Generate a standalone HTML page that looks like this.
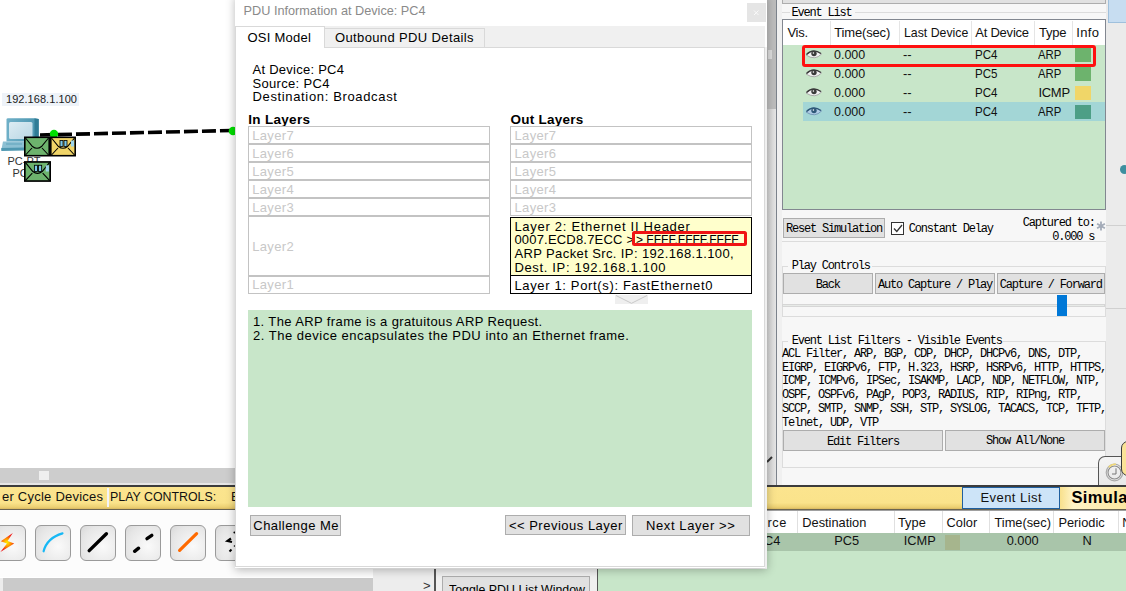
<!DOCTYPE html>
<html><head><meta charset="utf-8"><style>
html,body{margin:0;padding:0;width:1126px;height:591px;overflow:hidden;background:#fff}
body>div,body>svg{position:absolute}
</style></head><body>
<div style="left:0px;top:0px;width:1126px;height:591px;background:#fff"></div>
<div style="left:2px;top:93px;width:77px;height:13px;background:#eef3f9"></div>
<div style="left:6px;top:93.29px;font:normal 11px/13px 'Liberation Sans', sans-serif;letter-spacing:0.05px;color:#1a1a1a;white-space:pre;">192.168.1.100</div>
<svg style="left:0;top:112px" width="80" height="72" viewBox="0 112 80 72">
<defs><linearGradient id="scr" x1="0" y1="0" x2="1" y2="1"><stop offset="0" stop-color="#dcecf3"/><stop offset="1" stop-color="#b9d7e4"/></linearGradient>
<linearGradient id="frm" x1="0" y1="0" x2="1" y2="0"><stop offset="0" stop-color="#6fb0c8"/><stop offset="1" stop-color="#4a94ae"/></linearGradient></defs>
<path d="M6.5 119.5 Q6.5 118.3 8 118.3 L35 118.3 L38.7 119 L38.7 141.5 L6.5 141.5 Z" fill="url(#frm)"/>
<path d="M34.5 118.6 L38.7 119 L38.7 141.5 L34.5 141.5 Z" fill="#2f7c96"/>
<rect x="9" y="122" width="23.5" height="17" rx="1.5" fill="url(#scr)"/>
<path d="M3 141.5 L26 141.5 L24.5 149 L1.3 150 Z" fill="#8cc0d3"/>
<path d="M1.3 148 L24.8 147.5 L24.5 150.5 L1.3 151 Z" fill="#4f98b1"/>
<path d="M6 144 L22 144" stroke="#5ea3bb" stroke-width="1"/>
</svg>
<div style="left:7.5px;top:154.79px;font:normal 11px/13px 'Liberation Sans', sans-serif;letter-spacing:0px;color:#333;white-space:pre;">PC-PT</div>
<div style="left:12.5px;top:167.29px;font:normal 11px/13px 'Liberation Sans', sans-serif;letter-spacing:0px;color:#333;white-space:pre;">PC4</div>
<svg style="left:0;top:120px" width="236" height="24" viewBox="0 120 236 24">
<line x1="40" y1="135" x2="232" y2="130.5" stroke="#000" stroke-width="3.6" stroke-dasharray="14 4"/>
<circle cx="54" cy="134" r="4.2" fill="#00e000"/>
<circle cx="233" cy="131" r="4.3" fill="#00e000"/>
</svg>
<svg style="left:24px;top:135.5px" width="26" height="21" viewBox="0 0 26 20"><rect x="0.8" y="0.8" width="24.4" height="18.4" fill="#6db36d" stroke="#000" stroke-width="1.6"/><path d="M1.5 1.5 L8.5 10 Q13 13.5 17.5 10 L24.5 1.5 M1.5 18.5 L8 11.5 M24.5 18.5 L18 11.5" fill="none" stroke="#000" stroke-width="1.1"/></svg>
<svg style="left:50px;top:135.5px" width="26" height="21" viewBox="0 0 26 20"><rect x="0.8" y="0.8" width="24.4" height="18.4" fill="#f0d468" stroke="#000" stroke-width="1.6"/><path d="M1.5 1.5 L8.5 10 Q13 13.5 17.5 10 L24.5 1.5 M1.5 18.5 L8 11.5 M24.5 18.5 L18 11.5" fill="none" stroke="#000" stroke-width="1.1"/><rect x="10" y="4" width="3" height="6" fill="#7cc8e8" stroke="#000" stroke-width="0.8"/><rect x="14" y="4" width="3" height="6" fill="#7cc8e8" stroke="#000" stroke-width="0.8"/><rect x="21" y="4" width="3" height="6" fill="#9cd4ea"/></svg>
<svg style="left:24px;top:160.5px" width="27" height="21" viewBox="0 0 26 20"><rect x="0.8" y="0.8" width="24.4" height="18.4" fill="#6db36d" stroke="#000" stroke-width="1.6"/><path d="M1.5 1.5 L8.5 10 Q13 13.5 17.5 10 L24.5 1.5 M1.5 18.5 L8 11.5 M24.5 18.5 L18 11.5" fill="none" stroke="#000" stroke-width="1.1"/><rect x="10" y="4" width="3" height="6" fill="#7cc8e8" stroke="#000" stroke-width="0.8"/><rect x="14" y="4" width="3" height="6" fill="#7cc8e8" stroke="#000" stroke-width="0.8"/><rect x="21" y="4" width="3" height="6" fill="#9cd4ea"/></svg>
<div style="left:0px;top:468px;width:236px;height:15px;background:#cdcdcd"></div>
<div style="left:39px;top:471px;width:10px;height:9px;background:#efefef"></div>
<div style="left:0px;top:483px;width:1126px;height:2px;background:#e6e6e6"></div>
<div style="left:0px;top:485px;width:1126px;height:1.5px;background:#3c3c3c"></div>
<div style="left:0px;top:486.5px;width:1126px;height:22px;background:linear-gradient(#fbe48e,#fae38b 72%,#ecd072 92%,#d8b860)"></div>
<div style="left:0px;top:508.5px;width:1126px;height:1.5px;background:#6a6450"></div>
<div style="left:2px;top:489.09px;font:normal 13px/16px 'Liberation Sans', sans-serif;letter-spacing:0.232px;color:#111;white-space:pre;">er Cycle Devices</div>
<div style="left:107px;top:488px;width:2px;height:19px;background:#f4f4f8"></div>
<div style="left:109.5px;top:489.09px;font:normal 13px/16px 'Liberation Sans', sans-serif;letter-spacing:0px;color:#111;white-space:pre;transform:scaleX(0.9525);transform-origin:0 0;">PLAY CONTROLS:</div>
<div style="left:231px;top:489.09px;font:normal 13px/16px 'Liberation Sans', sans-serif;letter-spacing:0px;color:#111;white-space:pre;">B</div>
<div style="left:0px;top:510px;width:770px;height:67px;background:#fcfcfc"></div>
<div style="left:-10px;top:525px;width:36px;height:36px;box-sizing:border-box;border:1px solid #9a9a9a;border-radius:6px;background:radial-gradient(circle at 65% 60%,#fafafa,#e6e6e6 70%,#d8d8d8)"></div>
<div style="left:35px;top:525px;width:36px;height:36px;box-sizing:border-box;border:1px solid #9a9a9a;border-radius:6px;background:radial-gradient(circle at 65% 60%,#fafafa,#e6e6e6 70%,#d8d8d8)"></div>
<div style="left:80px;top:525px;width:36px;height:36px;box-sizing:border-box;border:1px solid #9a9a9a;border-radius:6px;background:radial-gradient(circle at 65% 60%,#fafafa,#e6e6e6 70%,#d8d8d8)"></div>
<div style="left:125px;top:525px;width:36px;height:36px;box-sizing:border-box;border:1px solid #9a9a9a;border-radius:6px;background:radial-gradient(circle at 65% 60%,#fafafa,#e6e6e6 70%,#d8d8d8)"></div>
<div style="left:170px;top:525px;width:36px;height:36px;box-sizing:border-box;border:1px solid #9a9a9a;border-radius:6px;background:radial-gradient(circle at 65% 60%,#fafafa,#e6e6e6 70%,#d8d8d8)"></div>
<div style="left:215px;top:525px;width:36px;height:36px;box-sizing:border-box;border:1px solid #9a9a9a;border-radius:6px;background:radial-gradient(circle at 65% 60%,#fafafa,#e6e6e6 70%,#d8d8d8)"></div>
<svg style="left:0;top:525px" width="236" height="36" viewBox="0 525 236 36">
<defs><radialGradient id="lg" gradientUnits="userSpaceOnUse" cx="7" cy="542.5" r="8"><stop offset="0" stop-color="#fff000"/><stop offset="0.45" stop-color="#ff9a00"/><stop offset="1" stop-color="#f01818"/></radialGradient></defs>
<path d="M12.8 533 L0.8 541.2 L7 543.4 L0.4 552 L14.2 543.4 L7.6 541 Z" fill="url(#lg)"/>
<path d="M43.6 551.3 Q47 538 62.5 533.4" fill="none" stroke="#18b8f5" stroke-width="2.2" stroke-linecap="round"/>
<line x1="89.2" y1="550.6" x2="106.4" y2="533.8" stroke="#000" stroke-width="3.4" stroke-linecap="round"/>
<line x1="134.6" y1="551.3" x2="138.6" y2="548.2" stroke="#000" stroke-width="3.4" stroke-linecap="round"/>
<line x1="147" y1="538.6" x2="151.8" y2="535.4" stroke="#000" stroke-width="3.4" stroke-linecap="round"/>
<line x1="179.6" y1="550.4" x2="196.6" y2="533.7" stroke="#ff6a00" stroke-width="3.2" stroke-linecap="round"/>
<path d="M231 538.5 L227.5 541 L232 542" fill="none" stroke="#000" stroke-width="2.2"/>
<circle cx="234.5" cy="532.5" r="1.1" fill="#000"/><circle cx="234.5" cy="546" r="0.8" fill="#000"/><path d="M229.5 551.5 L231.5 549.5" stroke="#000" stroke-width="2"/>
</svg>
<div style="left:0px;top:577.5px;width:1126px;height:14px;background:#cacaca"></div>
<div style="left:0px;top:577.5px;width:3px;height:14px;background:#ececec"></div>
<div style="left:373px;top:569px;width:62px;height:22px;background:#ededed"></div>
<div style="left:423px;top:578.09px;font:normal 13px/16px 'Liberation Sans', sans-serif;letter-spacing:0px;color:#333;white-space:pre;">&gt;</div>
<div style="left:434px;top:569px;width:1.5px;height:22px;background:#555"></div>
<div style="left:435.5px;top:569px;width:162px;height:22px;background:#f0f0f0"></div>
<div style="left:442px;top:575.5px;width:148px;height:20px;box-sizing:border-box;border:1px solid #adadad;background:#e1e1e1"></div>
<div style="left:449px;top:582.09px;font:normal 13px/16px 'Liberation Sans', sans-serif;letter-spacing:0px;color:#000;white-space:pre;transform:scaleX(0.9507);transform-origin:0 0;">Toggle PDU List Window</div>
<div style="left:596.5px;top:569px;width:1.5px;height:22px;background:#555"></div>
<div style="left:598px;top:569px;width:528px;height:22px;background:#c8e6c9"></div>
<div style="left:767px;top:510px;width:359px;height:81px;background:#c8e6c9"></div>
<div style="left:767px;top:510px;width:359px;height:1px;background:#a0a0a0"></div>
<div style="left:767px;top:511px;width:359px;height:21.5px;background:#fff"></div>
<div style="left:767px;top:532.5px;width:359px;height:18px;background:#a9c5aa"></div>
<div style="left:797.2px;top:511px;width:1px;height:21.5px;background:#e0e0e0"></div>
<div style="left:893.7px;top:511px;width:1px;height:21.5px;background:#e0e0e0"></div>
<div style="left:941.5px;top:511px;width:1px;height:21.5px;background:#e0e0e0"></div>
<div style="left:989.2px;top:511px;width:1px;height:21.5px;background:#e0e0e0"></div>
<div style="left:1053.3px;top:511px;width:1px;height:21.5px;background:#e0e0e0"></div>
<div style="left:1117.5px;top:511px;width:1px;height:21.5px;background:#e0e0e0"></div>
<div style="left:767.6px;top:515.26px;font:normal 12.8px/15px 'Liberation Sans', sans-serif;letter-spacing:0.509px;color:#111;white-space:pre;">rce</div>
<div style="left:802.3px;top:515.26px;font:normal 12.8px/15px 'Liberation Sans', sans-serif;letter-spacing:0px;color:#111;white-space:pre;">Destination</div>
<div style="left:898px;top:515.26px;font:normal 12.8px/15px 'Liberation Sans', sans-serif;letter-spacing:0px;color:#111;white-space:pre;">Type</div>
<div style="left:946.6px;top:515.26px;font:normal 12.8px/15px 'Liberation Sans', sans-serif;letter-spacing:0px;color:#111;white-space:pre;">Color</div>
<div style="left:994.5px;top:515.26px;font:normal 12.8px/15px 'Liberation Sans', sans-serif;letter-spacing:0px;color:#111;white-space:pre;">Time(sec)</div>
<div style="left:1058.4px;top:515.26px;font:normal 12.8px/15px 'Liberation Sans', sans-serif;letter-spacing:0px;color:#111;white-space:pre;">Periodic</div>
<div style="left:1122.2px;top:515.26px;font:normal 12.8px/15px 'Liberation Sans', sans-serif;letter-spacing:0px;color:#111;white-space:pre;">Num</div>
<div style="left:764px;top:532.66px;font:normal 12.8px/15px 'Liberation Sans', sans-serif;letter-spacing:0px;color:#111;white-space:pre;">C4</div>
<div style="left:834.2px;top:532.66px;font:normal 12.8px/15px 'Liberation Sans', sans-serif;letter-spacing:0px;color:#111;white-space:pre;">PC5</div>
<div style="left:903.7px;top:532.66px;font:normal 12.8px/15px 'Liberation Sans', sans-serif;letter-spacing:0px;color:#111;white-space:pre;">ICMP</div>
<div style="left:945.3px;top:535px;width:14.5px;height:15px;background:#a6b58d"></div>
<div style="left:1006.7px;top:532.66px;font:normal 12.8px/15px 'Liberation Sans', sans-serif;letter-spacing:0px;color:#111;white-space:pre;">0.000</div>
<div style="left:1082.4px;top:532.66px;font:normal 12.8px/15px 'Liberation Sans', sans-serif;letter-spacing:0px;color:#111;white-space:pre;">N</div>
<div style="left:962.2px;top:486.5px;width:97.5px;height:22px;box-sizing:border-box;border:1.5px solid #1f5f9f;background:#cde4f8"></div>
<div style="left:980.4px;top:490.29px;font:normal 13px/16px 'Liberation Sans', sans-serif;letter-spacing:0.45px;color:#111;white-space:pre;">Event List</div>
<div style="left:1060px;top:486.5px;width:66px;height:22px;background:linear-gradient(90deg,#f8e08c,#fff4c8 20%,#fbe7a0)"></div>
<div style="left:1071.5px;top:487.38px;font:bold 16.5px/20px 'Liberation Sans', sans-serif;letter-spacing:0.35px;color:#000;white-space:pre;">Simulation</div>
<div style="left:767px;top:0px;width:10px;height:485px;background:linear-gradient(90deg,#d2d2d2,#e8e8e8)"></div>
<div style="left:767px;top:0px;width:9px;height:109px;background:#bdbdbd"></div>
<div style="left:767.5px;top:50px;width:4.5px;height:9px;background:#dedede"></div>
<div style="left:776px;top:0px;width:1.2px;height:485px;background:#7c838c"></div>
<div style="left:777px;top:0px;width:349px;height:485px;background:#f0f0f0"></div>
<div style="left:782px;top:0px;width:324px;height:485px;background:#f7f7f7"></div>
<div style="left:1106px;top:0px;width:20px;height:485px;background:#ebebeb"></div>
<div style="left:1108.3px;top:-1px;width:19px;height:23.8px;box-sizing:border-box;border:1px solid #9fc0dc;background:#c7ddf1"></div>
<div style="left:1106px;top:225px;width:20px;height:1px;background:#d0d0d0"></div>
<div style="left:1106px;top:308px;width:20px;height:1px;background:#d0d0d0"></div>
<div style="left:1120px;top:165px;width:9px;height:9px;border-radius:50%;background:#3d8f9f"></div>
<div style="left:781.5px;top:-10px;width:324px;height:13.5px;box-sizing:border-box;border:1px solid #adadad;background:#e1e1e1"></div>
<div style="left:782px;top:12.4px;width:8px;height:1px;background:#dcdcdc"></div>
<div style="left:855px;top:12.4px;width:251px;height:1px;background:#dcdcdc"></div>
<div style="left:791.6px;top:6.41px;font:normal 12px/14px 'Liberation Mono', monospace;letter-spacing:-1.2px;color:#000;white-space:pre;">Event List</div>
<div style="left:782px;top:18.8px;width:324px;height:191.7px;box-sizing:border-box;border:1px solid #828790;background:#c8e6c9"></div>
<div style="left:783px;top:19.8px;width:322px;height:25.2px;background:#fff"></div>
<div style="left:830px;top:20.5px;width:1px;height:24.5px;background:#e5e5e5"></div>
<div style="left:898.9px;top:20.5px;width:1px;height:24.5px;background:#e5e5e5"></div>
<div style="left:970.6px;top:20.5px;width:1px;height:24.5px;background:#e5e5e5"></div>
<div style="left:1034.4px;top:20.5px;width:1px;height:24.5px;background:#e5e5e5"></div>
<div style="left:1071.7px;top:20.5px;width:1px;height:24.5px;background:#e5e5e5"></div>
<div style="left:787.4px;top:25.09px;font:normal 13px/16px 'Liberation Sans', sans-serif;letter-spacing:-0.245px;color:#111;white-space:pre;">Vis.</div>
<div style="left:834.2px;top:25.09px;font:normal 13px/16px 'Liberation Sans', sans-serif;letter-spacing:-0.149px;color:#111;white-space:pre;">Time(sec)</div>
<div style="left:903.7px;top:25.09px;font:normal 13px/16px 'Liberation Sans', sans-serif;letter-spacing:0px;color:#111;white-space:pre;transform:scaleX(0.9467);transform-origin:0 0;">Last Device</div>
<div style="left:975.2px;top:25.09px;font:normal 13px/16px 'Liberation Sans', sans-serif;letter-spacing:-0.216px;color:#111;white-space:pre;">At Device</div>
<div style="left:1039px;top:25.09px;font:normal 13px/16px 'Liberation Sans', sans-serif;letter-spacing:-0.228px;color:#111;white-space:pre;">Type</div>
<div style="left:1076.3px;top:25.09px;font:normal 13px/16px 'Liberation Sans', sans-serif;letter-spacing:0.339px;color:#111;white-space:pre;">Info</div>
<svg style="left:805px;top:49px" width="18" height="11" viewBox="0 0 18 11">
<path d="M1 6 Q8 -1.5 16.5 5 Q10 12 1 6 Z" fill="#f2f2f2" stroke="#a0a0a0" stroke-width="0.9"/>
<path d="M1.5 5.5 Q8 -1 16 4.5" fill="none" stroke="#3a3a3a" stroke-width="1.3"/>
<circle cx="9" cy="4.6" r="2.7" fill="#3a3a3a"/><circle cx="8.4" cy="4" r="0.8" fill="#fff"/>
</svg>
<div style="left:834.2px;top:46.89px;font:normal 13px/16px 'Liberation Sans', sans-serif;letter-spacing:0px;color:#111;white-space:pre;transform:scaleX(0.9591);transform-origin:0 0;">0.000</div>
<div style="left:903px;top:46.89px;font:normal 13px/16px 'Liberation Sans', sans-serif;letter-spacing:-0.2px;color:#111;white-space:pre;">--</div>
<div style="left:974.6px;top:46.89px;font:normal 13px/16px 'Liberation Sans', sans-serif;letter-spacing:0px;color:#111;white-space:pre;transform:scaleX(0.8897);transform-origin:0 0;">PC4</div>
<div style="left:1038.4px;top:46.89px;font:normal 13px/16px 'Liberation Sans', sans-serif;letter-spacing:0px;color:#111;white-space:pre;transform:scaleX(0.8717);transform-origin:0 0;">ARP</div>
<div style="left:1075px;top:47.6px;width:16.2px;height:14px;background:#6db36d"></div>
<svg style="left:805px;top:68px" width="18" height="11" viewBox="0 0 18 11">
<path d="M1 6 Q8 -1.5 16.5 5 Q10 12 1 6 Z" fill="#f2f2f2" stroke="#a0a0a0" stroke-width="0.9"/>
<path d="M1.5 5.5 Q8 -1 16 4.5" fill="none" stroke="#3a3a3a" stroke-width="1.3"/>
<circle cx="9" cy="4.6" r="2.7" fill="#3a3a3a"/><circle cx="8.4" cy="4" r="0.8" fill="#fff"/>
</svg>
<div style="left:834.2px;top:65.89px;font:normal 13px/16px 'Liberation Sans', sans-serif;letter-spacing:0px;color:#111;white-space:pre;transform:scaleX(0.9591);transform-origin:0 0;">0.000</div>
<div style="left:903px;top:65.89px;font:normal 13px/16px 'Liberation Sans', sans-serif;letter-spacing:-0.2px;color:#111;white-space:pre;">--</div>
<div style="left:974.6px;top:65.89px;font:normal 13px/16px 'Liberation Sans', sans-serif;letter-spacing:0px;color:#111;white-space:pre;transform:scaleX(0.8897);transform-origin:0 0;">PC5</div>
<div style="left:1038.4px;top:65.89px;font:normal 13px/16px 'Liberation Sans', sans-serif;letter-spacing:0px;color:#111;white-space:pre;transform:scaleX(0.8717);transform-origin:0 0;">ARP</div>
<div style="left:1075px;top:66.6px;width:16.2px;height:14px;background:#6db36d"></div>
<svg style="left:805px;top:87px" width="18" height="11" viewBox="0 0 18 11">
<path d="M1 6 Q8 -1.5 16.5 5 Q10 12 1 6 Z" fill="#f2f2f2" stroke="#a0a0a0" stroke-width="0.9"/>
<path d="M1.5 5.5 Q8 -1 16 4.5" fill="none" stroke="#3a3a3a" stroke-width="1.3"/>
<circle cx="9" cy="4.6" r="2.7" fill="#3a3a3a"/><circle cx="8.4" cy="4" r="0.8" fill="#fff"/>
</svg>
<div style="left:834.2px;top:84.89px;font:normal 13px/16px 'Liberation Sans', sans-serif;letter-spacing:0px;color:#111;white-space:pre;transform:scaleX(0.9591);transform-origin:0 0;">0.000</div>
<div style="left:903px;top:84.89px;font:normal 13px/16px 'Liberation Sans', sans-serif;letter-spacing:-0.2px;color:#111;white-space:pre;">--</div>
<div style="left:974.6px;top:84.89px;font:normal 13px/16px 'Liberation Sans', sans-serif;letter-spacing:0px;color:#111;white-space:pre;transform:scaleX(0.8897);transform-origin:0 0;">PC4</div>
<div style="left:1038.4px;top:84.89px;font:normal 13px/16px 'Liberation Sans', sans-serif;letter-spacing:-0.267px;color:#111;white-space:pre;">ICMP</div>
<div style="left:1075px;top:85.6px;width:16.2px;height:14px;background:#f0d668"></div>
<div style="left:803px;top:102px;width:302px;height:19px;background:#a3d6d6"></div>
<svg style="left:805px;top:106px" width="18" height="11" viewBox="0 0 18 11">
<path d="M1 6 Q8 -1.5 16.5 5 Q10 12 1 6 Z" fill="#b0cde6" stroke="#6f93b3" stroke-width="0.9"/>
<path d="M1.5 5.5 Q8 -1 16 4.5" fill="none" stroke="#2f5878" stroke-width="1.3"/>
<circle cx="9" cy="4.6" r="2.7" fill="#2f5878"/><circle cx="8.4" cy="4" r="0.8" fill="#fff"/>
</svg>
<div style="left:834.2px;top:103.89px;font:normal 13px/16px 'Liberation Sans', sans-serif;letter-spacing:0px;color:#111;white-space:pre;transform:scaleX(0.9591);transform-origin:0 0;">0.000</div>
<div style="left:903px;top:103.89px;font:normal 13px/16px 'Liberation Sans', sans-serif;letter-spacing:-0.2px;color:#111;white-space:pre;">--</div>
<div style="left:974.6px;top:103.89px;font:normal 13px/16px 'Liberation Sans', sans-serif;letter-spacing:0px;color:#111;white-space:pre;transform:scaleX(0.8897);transform-origin:0 0;">PC4</div>
<div style="left:1038.4px;top:103.89px;font:normal 13px/16px 'Liberation Sans', sans-serif;letter-spacing:0px;color:#111;white-space:pre;transform:scaleX(0.8717);transform-origin:0 0;">ARP</div>
<div style="left:1075px;top:104.6px;width:16.2px;height:14px;background:#4d9f86"></div>
<div style="left:802px;top:45px;width:294px;height:21.5px;box-sizing:border-box;border:3px solid #ff1010;border-radius:3px"></div>
<div style="left:783px;top:218.3px;width:102px;height:20.2px;box-sizing:border-box;border:1px solid #adadad;background:#e1e1e1"></div>
<div style="left:785.9px;top:222.21px;font:normal 12px/14px 'Liberation Mono', monospace;letter-spacing:-1.2px;color:#000;white-space:pre;">Reset Simulation</div>
<div style="left:890.8px;top:222.2px;width:13.2px;height:13px;box-sizing:border-box;border:1px solid #333;background:#fff"></div>
<svg style="left:890.8px;top:222.2px" width="14" height="13" viewBox="0 0 14 13"><path d="M3 6.5 L5.8 9.5 L11 3" fill="none" stroke="#333" stroke-width="1.3"/></svg>
<div style="left:908.7px;top:222.21px;font:normal 12px/14px 'Liberation Mono', monospace;letter-spacing:-1.2px;color:#000;white-space:pre;">Constant Delay</div>
<div style="left:1022.7px;top:216.01px;font:normal 12px/14px 'Liberation Mono', monospace;letter-spacing:-1.2px;color:#000;white-space:pre;">Captured to:</div>
<div style="left:1052.3px;top:230.11px;font:normal 12px/14px 'Liberation Mono', monospace;letter-spacing:-1.2px;color:#000;white-space:pre;">0.000 s</div>
<svg style="left:1095px;top:220px" width="12" height="12" viewBox="0 0 12 12"><path d="M6 1.5 V10.5 M2.1 3.75 L9.9 8.25 M2.1 8.25 L9.9 3.75" stroke="#a3abb8" stroke-width="1.8"/></svg>
<div style="left:782px;top:241px;width:324px;height:1px;background:#dcdcdc"></div>
<div style="left:781.5px;top:265.5px;width:324.5px;height:51px;box-sizing:border-box;border:1px solid #dcdcdc"></div>
<div style="left:788px;top:262px;width:84px;height:7px;background:#f7f7f7"></div>
<div style="left:791.8px;top:259.01px;font:normal 12px/14px 'Liberation Mono', monospace;letter-spacing:-1.2px;color:#000;white-space:pre;">Play Controls</div>
<div style="left:783px;top:273.3px;width:89.6px;height:20.3px;box-sizing:border-box;border:1px solid #adadad;background:#e1e1e1"></div>
<div style="left:783px;top:274.5px;width:89.6px;height:20.3px;font:12px/20.3px 'Liberation Mono', monospace;letter-spacing:-1.2px;text-align:center;color:#000;white-space:pre">Back</div>
<div style="left:875.2px;top:273.3px;width:119.6px;height:20.3px;box-sizing:border-box;border:1px solid #adadad;background:#e1e1e1"></div>
<div style="left:875.2px;top:274.5px;width:119.6px;height:20.3px;font:12px/20.3px 'Liberation Mono', monospace;letter-spacing:-1.2px;text-align:center;color:#000;white-space:pre">Auto Capture / Play</div>
<div style="left:997px;top:273.3px;width:107.7px;height:20.3px;box-sizing:border-box;border:1px solid #adadad;background:#e1e1e1"></div>
<div style="left:997px;top:274.5px;width:107.7px;height:20.3px;font:12px/20.3px 'Liberation Mono', monospace;letter-spacing:-1.2px;text-align:center;color:#000;white-space:pre">Capture / Forward</div>
<div style="left:782px;top:303.6px;width:323px;height:3px;box-sizing:border-box;border:1px solid #d6d6d6;background:#e7eae7"></div>
<div style="left:1057px;top:294.6px;width:10px;height:21.5px;background:#0078d7"></div>
<div style="left:781.5px;top:340.5px;width:324.5px;height:127px;box-sizing:border-box;border:1px solid #dcdcdc"></div>
<div style="left:788px;top:337px;width:215px;height:7px;background:#f7f7f7"></div>
<div style="left:791.8px;top:334.01px;font:normal 12px/14px 'Liberation Mono', monospace;letter-spacing:-1.2px;color:#000;white-space:pre;">Event List Filters - Visible Events</div>
<div style="left:782px;top:347.68px;font:normal 12px/13.85px 'Liberation Mono', monospace;letter-spacing:-1.2px;color:#000;white-space:pre;">ACL Filter, ARP, BGP, CDP, DHCP, DHCPv6, DNS, DTP,<br>EIGRP, EIGRPv6, FTP, H.323, HSRP, HSRPv6, HTTP, HTTPS,<br>ICMP, ICMPv6, IPSec, ISAKMP, LACP, NDP, NETFLOW, NTP,<br>OSPF, OSPFv6, PAgP, POP3, RADIUS, RIP, RIPng, RTP,<br>SCCP, SMTP, SNMP, SSH, STP, SYSLOG, TACACS, TCP, TFTP,<br>Telnet, UDP, VTP</div>
<div style="left:783px;top:430.4px;width:160px;height:20.2px;box-sizing:border-box;border:1px solid #adadad;background:#e1e1e1"></div>
<div style="left:783px;top:431.59999999999997px;width:160px;height:20.2px;font:12px/20.2px 'Liberation Mono', monospace;letter-spacing:-1.2px;text-align:center;color:#000;white-space:pre">Edit Filters</div>
<div style="left:945.3px;top:430.2px;width:159.4px;height:20.4px;box-sizing:border-box;border:1px solid #adadad;background:#e1e1e1"></div>
<div style="left:945.3px;top:431.4px;width:159.4px;height:20.4px;font:12px/20.4px 'Liberation Mono', monospace;letter-spacing:-1.2px;text-align:center;color:#000;white-space:pre">Show All/None</div>
<div style="left:1097.6px;top:455.5px;width:40px;height:29.5px;box-sizing:border-box;border:1.3px solid #555;border-bottom:none;border-radius:7px 7px 0 0;background:linear-gradient(#f4f4f4,#e8e8e8)"></div>
<svg style="left:1104.2px;top:461.5px" width="21" height="21" viewBox="0 0 21 21"><circle cx="10.5" cy="10.5" r="8.3" fill="none" stroke="#aaa" stroke-width="1.2"/><circle cx="10.5" cy="10.5" r="6.5" fill="none" stroke="#8a8a8a" stroke-width="1.1"/><path d="M4.8 5.2 A8.3 8.3 0 0 1 12 2.3" fill="none" stroke="#f0d878" stroke-width="1.6"/><path d="M12 6.3 V12 H8" fill="none" stroke="#777" stroke-width="1"/></svg>
<div style="left:1121.3px;top:441px;width:20px;height:35px;box-sizing:border-box;border:1.8px solid #3a3a3a;border-radius:7px;background:linear-gradient(90deg,#fbe49a,#f9dc80)"></div>
<div style="left:1097px;top:484.6px;width:29px;height:1.5px;background:#3c3c3c"></div>
<svg style="left:766px;top:455px" width="8" height="8" viewBox="0 0 8 8"><path d="M1 7 L6 2" stroke="#333" stroke-width="2"/></svg>
<div style="left:235px;top:-5px;width:532px;height:572.5px;background:#fff;box-shadow:0 2px 9px rgba(0,0,0,0.28)"></div>
<div style="left:243.6px;top:3.70px;font:normal 12.7px/15px 'Liberation Sans', sans-serif;letter-spacing:0px;color:#8a8a8a;white-space:pre;">PDU Information at Device: PC4</div>
<div style="left:747px;top:3px;width:19px;height:19px;background:#e5e5e5"></div>
<svg style="left:747px;top:3px" width="19" height="19" viewBox="0 0 19 19"><path d="M7 7.5 L11.5 12 M11.5 7.5 L7 12" stroke="#fafafa" stroke-width="1"/></svg>
<div style="left:235px;top:47px;width:529.5px;height:520px;box-sizing:border-box;border:1px solid #d9d9d9;border-top:1px solid #d9d9d9;background:#fff"></div>
<div style="left:764.5px;top:47px;width:2.5px;height:520.5px;background:#f0f0f0"></div>
<div style="left:235px;top:26px;width:529.5px;height:21px;background:#f0f0f0"></div>
<div style="left:235px;top:26px;width:90px;height:22px;box-sizing:border-box;border:1px solid #d9d9d9;border-bottom:none;background:#fff"></div>
<div style="left:247.4px;top:30.29px;font:normal 13px/16px 'Liberation Sans', sans-serif;letter-spacing:0.25px;color:#000;white-space:pre;">OSI Model</div>
<div style="left:324px;top:28px;width:160.5px;height:19px;box-sizing:border-box;border:1px solid #d9d9d9;border-bottom:none;background:#f0f0f0"></div>
<div style="left:335px;top:30.29px;font:normal 13px/16px 'Liberation Sans', sans-serif;letter-spacing:0.37px;color:#000;white-space:pre;">Outbound PDU Details</div>
<div style="left:252.5px;top:61.99px;font:normal 13px/16px 'Liberation Sans', sans-serif;letter-spacing:0.258px;color:#000;white-space:pre;">At Device: PC4</div>
<div style="left:252.5px;top:75.89px;font:normal 13px/16px 'Liberation Sans', sans-serif;letter-spacing:0.32px;color:#000;white-space:pre;">Source: PC4</div>
<div style="left:252.5px;top:89.49px;font:normal 13px/16px 'Liberation Sans', sans-serif;letter-spacing:0.648px;color:#000;white-space:pre;">Destination: Broadcast</div>
<div style="left:248.3px;top:111.82px;font:bold 13.5px/16px 'Liberation Sans', sans-serif;letter-spacing:0.3px;color:#000;white-space:pre;">In Layers</div>
<div style="left:510.6px;top:111.82px;font:bold 13.5px/16px 'Liberation Sans', sans-serif;letter-spacing:0.25px;color:#000;white-space:pre;">Out Layers</div>
<div style="left:248px;top:126.4px;width:242.3px;height:18px;box-sizing:border-box;border:1px solid #c3c3c3;background:#fff"></div>
<div style="left:252.2px;top:128.49px;font:normal 13px/16px 'Liberation Sans', sans-serif;letter-spacing:0.35px;color:#c8c8c8;white-space:pre;">Layer7</div>
<div style="left:248px;top:144.4px;width:242.3px;height:18px;box-sizing:border-box;border:1px solid #c3c3c3;background:#fff"></div>
<div style="left:252.2px;top:146.49px;font:normal 13px/16px 'Liberation Sans', sans-serif;letter-spacing:0.35px;color:#c8c8c8;white-space:pre;">Layer6</div>
<div style="left:248px;top:162.4px;width:242.3px;height:18px;box-sizing:border-box;border:1px solid #c3c3c3;background:#fff"></div>
<div style="left:252.2px;top:164.49px;font:normal 13px/16px 'Liberation Sans', sans-serif;letter-spacing:0.35px;color:#c8c8c8;white-space:pre;">Layer5</div>
<div style="left:248px;top:180.4px;width:242.3px;height:18px;box-sizing:border-box;border:1px solid #c3c3c3;background:#fff"></div>
<div style="left:252.2px;top:182.49px;font:normal 13px/16px 'Liberation Sans', sans-serif;letter-spacing:0.35px;color:#c8c8c8;white-space:pre;">Layer4</div>
<div style="left:248px;top:198.4px;width:242.3px;height:18px;box-sizing:border-box;border:1px solid #c3c3c3;background:#fff"></div>
<div style="left:252.2px;top:200.49px;font:normal 13px/16px 'Liberation Sans', sans-serif;letter-spacing:0.35px;color:#c8c8c8;white-space:pre;">Layer3</div>
<div style="left:510.3px;top:126.4px;width:241.4px;height:18px;box-sizing:border-box;border:1px solid #c3c3c3;background:#fff"></div>
<div style="left:514.5px;top:128.49px;font:normal 13px/16px 'Liberation Sans', sans-serif;letter-spacing:0.35px;color:#c8c8c8;white-space:pre;">Layer7</div>
<div style="left:510.3px;top:144.4px;width:241.4px;height:18px;box-sizing:border-box;border:1px solid #c3c3c3;background:#fff"></div>
<div style="left:514.5px;top:146.49px;font:normal 13px/16px 'Liberation Sans', sans-serif;letter-spacing:0.35px;color:#c8c8c8;white-space:pre;">Layer6</div>
<div style="left:510.3px;top:162.4px;width:241.4px;height:18px;box-sizing:border-box;border:1px solid #c3c3c3;background:#fff"></div>
<div style="left:514.5px;top:164.49px;font:normal 13px/16px 'Liberation Sans', sans-serif;letter-spacing:0.35px;color:#c8c8c8;white-space:pre;">Layer5</div>
<div style="left:510.3px;top:180.4px;width:241.4px;height:18px;box-sizing:border-box;border:1px solid #c3c3c3;background:#fff"></div>
<div style="left:514.5px;top:182.49px;font:normal 13px/16px 'Liberation Sans', sans-serif;letter-spacing:0.35px;color:#c8c8c8;white-space:pre;">Layer4</div>
<div style="left:510.3px;top:198.4px;width:241.4px;height:18px;box-sizing:border-box;border:1px solid #c3c3c3;background:#fff"></div>
<div style="left:514.5px;top:200.49px;font:normal 13px/16px 'Liberation Sans', sans-serif;letter-spacing:0.35px;color:#c8c8c8;white-space:pre;">Layer3</div>
<div style="left:248px;top:216.4px;width:242.3px;height:59.5px;box-sizing:border-box;border:1px solid #c3c3c3;background:#fff"></div>
<div style="left:252.2px;top:239.09px;font:normal 13px/16px 'Liberation Sans', sans-serif;letter-spacing:0.35px;color:#c8c8c8;white-space:pre;">Layer2</div>
<div style="left:248px;top:276px;width:242.3px;height:17.5px;box-sizing:border-box;border:1px solid #c3c3c3;background:#fff"></div>
<div style="left:252.2px;top:277.49px;font:normal 13px/16px 'Liberation Sans', sans-serif;letter-spacing:0.35px;color:#c8c8c8;white-space:pre;">Layer1</div>
<div style="left:510.3px;top:216.6px;width:241.4px;height:59.5px;box-sizing:border-box;border:1px solid #000;background:#ffffcc"></div>
<div style="left:514.4px;top:218.59px;font:normal 13px/16px 'Liberation Sans', sans-serif;letter-spacing:0.715px;color:#000;white-space:pre;">Layer 2: Ethernet II Header</div>
<div style="left:514.4px;top:232.39px;font:normal 13px/16px 'Liberation Sans', sans-serif;letter-spacing:0.193px;color:#000;white-space:pre;">0007.ECD8.7ECC &gt;</div>
<div style="left:636.2px;top:232.39px;font:normal 13px/16px 'Liberation Sans', sans-serif;letter-spacing:0px;color:#000;white-space:pre;transform:scaleX(0.9257);transform-origin:0 0;">&gt; FFFF.FFFF.FFFF</div>
<div style="left:514.4px;top:246.19px;font:normal 13px/16px 'Liberation Sans', sans-serif;letter-spacing:0.39px;color:#000;white-space:pre;">ARP Packet Src. IP: 192.168.1.100,</div>
<div style="left:514.4px;top:259.69px;font:normal 13px/16px 'Liberation Sans', sans-serif;letter-spacing:0.664px;color:#000;white-space:pre;">Dest. IP: 192.168.1.100</div>
<div style="left:510.3px;top:275.4px;width:241.4px;height:18.8px;box-sizing:border-box;border:1px solid #000;background:#fff"></div>
<div style="left:514.4px;top:278.29px;font:normal 13px/16px 'Liberation Sans', sans-serif;letter-spacing:0.651px;color:#000;white-space:pre;">Layer 1: Port(s): FastEthernet0</div>
<div style="left:632.4px;top:230.7px;width:114.2px;height:15.6px;box-sizing:border-box;border:3px solid #f01414;border-radius:2.5px"></div>
<svg style="left:615px;top:295px" width="33" height="9" viewBox="0 0 33 9"><rect width="33" height="9" fill="#efefef"/><path d="M1 0.5 L16.5 8.3 L32 0.5" fill="none" stroke="#c9c9c9" stroke-width="1"/></svg>
<div style="left:247.8px;top:310px;width:504.2px;height:197px;background:#c8e6c9"></div>
<div style="left:253px;top:313.99px;font:normal 13px/16px 'Liberation Sans', sans-serif;letter-spacing:0.381px;color:#000;white-space:pre;">1. The ARP frame is a gratuitous ARP Request.</div>
<div style="left:253px;top:327.89px;font:normal 13px/16px 'Liberation Sans', sans-serif;letter-spacing:0.514px;color:#000;white-space:pre;">2. The device encapsulates the PDU into an Ethernet frame.</div>
<div style="left:250.1px;top:515.3px;width:90.8px;height:20.3px;box-sizing:border-box;border:1px solid #adadad;background:#e1e1e1"></div>
<div style="left:253.3px;top:517.59px;font:normal 13px/16px 'Liberation Sans', sans-serif;letter-spacing:0.45px;color:#000;white-space:pre;">Challenge Me</div>
<div style="left:505.2px;top:515.2px;width:120.4px;height:20.2px;box-sizing:border-box;border:1px solid #adadad;background:#e1e1e1"></div>
<div style="left:508.9px;top:517.59px;font:normal 13px/16px 'Liberation Sans', sans-serif;letter-spacing:0.5px;color:#000;white-space:pre;">&lt;&lt; Previous Layer</div>
<div style="left:632px;top:515.1px;width:117.8px;height:20.8px;box-sizing:border-box;border:1px solid #adadad;background:#e1e1e1"></div>
<div style="left:646px;top:517.59px;font:normal 13px/16px 'Liberation Sans', sans-serif;letter-spacing:0.6px;color:#000;white-space:pre;">Next Layer &gt;&gt;</div>
</body></html>
